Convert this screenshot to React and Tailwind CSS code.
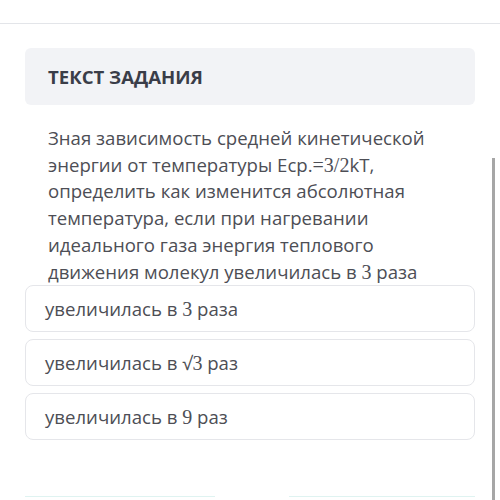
export default function App() {
  const options = [
    ['увеличилась в ', '3', ' раза'],
    ['увеличилась в √', '3', ' раз'],
    ['увеличилась в ', '9', ' раз'],
  ];

  return (
    <div className="relative w-[500px] h-[500px] overflow-hidden bg-white font-['Open_Sans',sans-serif] text-[#4d4e55]">
      <div className="h-[24px] border-b border-[#e3e5e9]" />

      <div className="px-[25px] pt-[24px]">
        <div className="h-[57px] rounded-md bg-[#f2f3f6] pl-[23px] flex items-center">
          <h2 className="text-[18.6px] font-bold text-[#3a3d48]">ТЕКСТ ЗАДАНИЯ</h2>
        </div>

        <p className="mt-[20px] h-[160px] pl-[23px] text-[18.6px] leading-[26.7px] whitespace-nowrap">
          Зная зависимость средней кинетической
          <br />
          энергии от температуры Еср.<span className="font-['Liberation_Serif',serif] text-[20px] leading-none">=3/2</span>kT,
          <br />
          определить как изменится абсолютная
          <br />
          температура, если при нагревании
          <br />
          идеального газа энергия теплового
          <br />
          движения молекул увеличилась в <span className="font-['Liberation_Serif',serif] text-[20px] leading-none">3</span> раза
        </p>

        <div className="flex flex-col gap-[7px]">
          {options.map((o, i) => (
            <div
              key={i}
              className="h-[47px] rounded-lg border border-[#e5e6ea] bg-white pl-[19px] flex items-center text-[18.6px]"
            >
              <span className="whitespace-pre">
                {o[0]}
                <span className="font-['Liberation_Serif',serif] text-[20px] leading-none">{o[1]}</span>
                {o[2]}
              </span>
            </div>
          ))}
        </div>

        <div className="mt-[56px] flex justify-between">
          <div className="w-[190px] h-[6px] border-t border-[#dff3f1]" />
          <div className="w-[186px] h-[6px] border-t border-[#dff3f1]" />
        </div>
      </div>

      {/* scrollbar */}
      <div className="absolute left-[492px] top-[158px] w-[3px] h-[342px] bg-[#a6a6a6]" />
    </div>
  );
}
